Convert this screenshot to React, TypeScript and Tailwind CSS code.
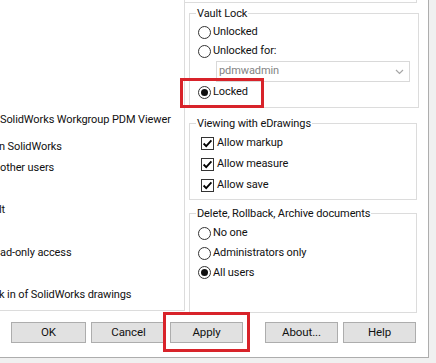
import React from 'react';

const Radio: React.FC<{ checked?: boolean }> = ({ checked }) => (
  <span className="flex h-[13px] w-[13px] shrink-0 items-center justify-center rounded-full border border-[#333] bg-white">
    {checked && <span className="h-[7px] w-[7px] rounded-full bg-[#111]" />}
  </span>
);

const Check: React.FC = () => (
  <span className="flex h-[13px] w-[13px] shrink-0 items-center justify-center border border-[#333] bg-white">
    <svg width="11" height="11" viewBox="0 0 11 11">
      <path d="M1.6 5.5 L4.2 8.1 L9.4 2.4" fill="none" stroke="#000" strokeWidth="1.8" />
    </svg>
  </span>
);

const RadioRow: React.FC<{ label: string; checked?: boolean; h: string }> = ({ label, checked, h }) => (
  <div className={`flex items-center gap-[2px] ${h}`}>
    <Radio checked={checked} />
    <span>{label}</span>
  </div>
);

const CheckRow: React.FC<{ label: string }> = ({ label }) => (
  <div className="ml-[3px] flex h-[21px] items-center gap-[3px]">
    <Check />
    <span>{label}</span>
  </div>
);

const Group: React.FC<{ title: string; className: string; children: React.ReactNode }> = ({ title, className, children }) => (
  <fieldset className={`w-[228px] border border-[#dcdcdc] px-[8px] ${className}`}>
    <legend className="-ml-[2px] px-[1px] leading-[15px]">{title}</legend>
    {children}
  </fieldset>
);

const LeftPanel: React.FC = () => (
  <div className="h-[311px] w-[185px] shrink-0 border-r border-b border-[#dcdcdc] leading-[16px] whitespace-nowrap">
    <div className="mt-[112px]">SolidWorks Workgroup PDM Viewer</div>
    <div className="mt-[11px] -ml-[1px]">n SolidWorks</div>
    <div className="mt-[5px]">other users</div>
    <div className="mt-[26px] -ml-[1px]">lt</div>
    <div className="mt-[27px]">ad-only access</div>
    <div className="mt-[26px] -ml-[1px]">k in of SolidWorks drawings</div>
  </div>
);

const RightPanel: React.FC = () => (
  <div className="flex flex-col pl-[4px]">
    {/* bottom edge of the group above, scrolled out of view */}
    <div className="-ml-[5px] h-[3px] w-[233px] border-r border-b border-[#dcdcdc]" />
    <Group title="Vault Lock" className="mt-[3px] h-[102px] pt-[1px]">
      <RadioRow label="Unlocked" h="h-[20px]" />
      <RadioRow label="Unlocked for:" h="h-[19px]" />
      <div className="ml-[18px] flex h-[21px] w-[194px] items-center justify-between border border-[#d9d9d9] bg-white pr-[5px] pl-[2px] text-[#838383]">
        <span>pdmwadmin</span>
        <svg width="9" height="6" viewBox="0 0 9 6">
          <path d="M1 1 L4.5 4.5 L8 1" fill="none" stroke="#a6a6a6" strokeWidth="1.2" />
        </svg>
      </div>
      <RadioRow label="Locked" checked h="h-[21px]" />
    </Group>
    <Group title="Viewing with eDrawings" className="mt-[8px] h-[85px] pt-[2px]">
      <CheckRow label="Allow markup" />
      <CheckRow label="Allow measure" />
      <CheckRow label="Allow save" />
    </Group>
    <Group title="Delete, Rollback, Archive documents" className="mt-[6px] h-[107px] pt-[2px]">
      <RadioRow label="No one" h="h-[20px]" />
      <RadioRow label="Administrators only" h="h-[20px]" />
      <RadioRow label="All users" checked h="h-[19px]" />
    </Group>
  </div>
);

const Btn: React.FC<{ label: string; className: string }> = ({ label, className }) => (
  <button className={`flex h-[21px] items-center justify-center border border-[#adadad] bg-[#e1e1e1] text-[11.5px] ${className}`}>
    {label}
  </button>
);

export default function App() {
  return (
    <div className="relative h-[363px] w-[436px] overflow-hidden bg-[#f0f0f0] font-['Roboto',sans-serif] text-[11px] tracking-[-0.1px] text-[#111]">
      <div className="flex h-[358px] w-[429px] flex-col border-r border-b border-[#adadad] bg-white">
        <div className="flex h-[313px]">
          <LeftPanel />
          <RightPanel />
        </div>
        <div className="flex pt-[9px]">
          <Btn label="OK" className="ml-[11px] w-[75px]" />
          <Btn label="Cancel" className="ml-[5px] w-[75px]" />
          <Btn label="Apply" className="ml-[4px] w-[73px]" />
          <Btn label="About..." className="ml-[22px] w-[73px]" />
          <Btn label="Help" className="ml-[5px] w-[73px]" />
        </div>
      </div>
      {/* red highlight marks */}
      <div className="pointer-events-none absolute top-[78px] left-[180px] h-[30px] w-[84px] border-[3px] border-[#d8232a]" />
      <div className="pointer-events-none absolute top-[312px] left-[163px] h-[40px] w-[87px] border-[3px] border-[#d8232a]" />
    </div>
  );
}
